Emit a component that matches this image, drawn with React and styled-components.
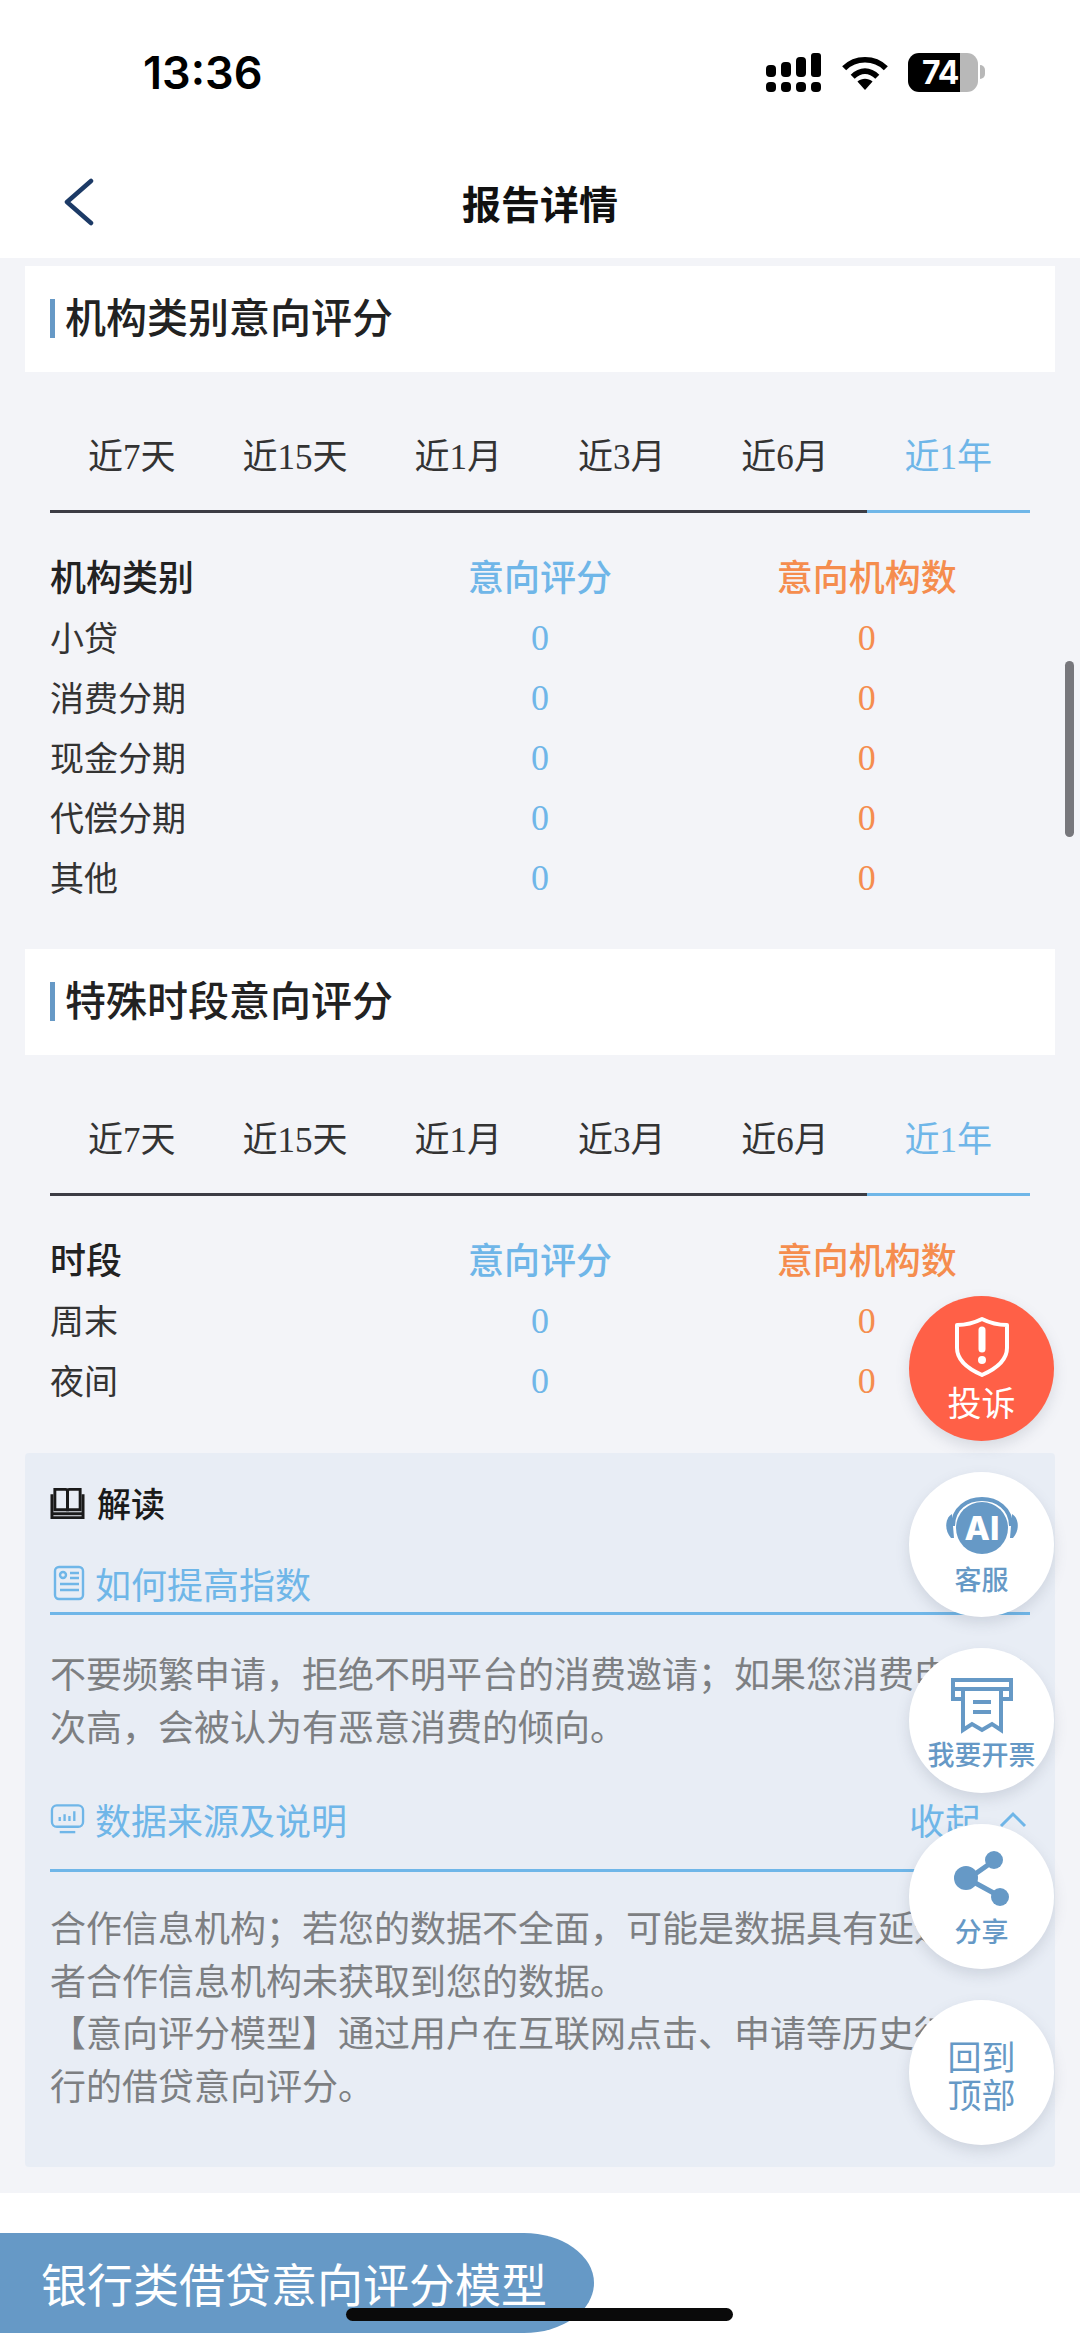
import React from "react";
import styled, { createGlobalStyle } from "styled-components";

const CJK = `"Noto Sans CJK SC", "Liberation Sans", sans-serif`;
const SERIF_CJK = `"Liberation Serif", "Noto Sans CJK SC", serif`;

const GlobalStyle = createGlobalStyle`
  html, body {
    margin: 0;
    padding: 0;
    background: #fff;
  }
  * {
    box-sizing: border-box;
  }
`;

const periods = ["近7天", "近15天", "近1月", "近3月", "近6月", "近1年"];

const Page = styled.div`
  position: relative;
  width: 1080px;
  height: 2341px;
  overflow: hidden;
  background: #fff;
  font-family: ${CJK};
`;

const StatusBar = styled.div`
  height: 146px;
  padding: 50px 102px 0 143px;
  display: flex;
  justify-content: space-between;
  align-items: flex-start;
`;

const Clock = styled.div`
  font-family: Inter, sans-serif;
  font-size: 45px;
  line-height: 46px;
  font-weight: 600;
  color: #000;
`;

const StatusIcons = styled.div`
  display: flex;
  align-items: center;
  gap: 19px;
  height: 39px;
  margin-top: 3px;
`;

const Battery = styled.div`
  position: relative;
  width: 70px;
  height: 39px;
  border-radius: 11px;
  background: linear-gradient(to right, #000 0, #000 52px, #b8b8b8 52px);
  color: #fff;
  font-family: Inter, sans-serif;
  font-size: 32px;
  line-height: 39px;
  font-weight: 700;
  letter-spacing: -1px;
  padding-left: 14px;
  white-space: nowrap;
  &::after {
    content: "";
    position: absolute;
    right: -7px;
    top: 12px;
    width: 5px;
    height: 14px;
    border-radius: 0 5px 5px 0;
    background: #b8b8b8;
  }
`;

const NavBar = styled.div`
  height: 112px;
  padding-left: 62px;
  display: flex;
  align-items: center;
  position: relative;
`;

const NavTitle = styled.div`
  position: absolute;
  left: 0;
  right: 0;
  top: 31px;
  text-align: center;
  font-size: 39px;
  line-height: 50px;
  font-weight: 700;
  color: #111;
`;

const Content = styled.div`
  background: #f3f4f8;
  padding: 8px 25px 26px;
`;

const TitleCard = styled.div`
  height: 106px;
  background: #fff;
  padding: 33px 0 0 25px;
`;

const CardTitle = styled.div`
  height: 39px;
  border-left: 5px solid #6699c6;
  padding-left: 10px;
  font-size: 41px;
  line-height: 32px;
  font-weight: 500;
  color: #222;
  white-space: nowrap;
`;

const Section = styled.div`
  padding: 0 25px;
  margin-bottom: ${(p) => p.$bottom || 0}px;
`;

const Tabs = styled.div`
  display: grid;
  grid-template-columns: repeat(6, 1fr);
  height: 141px;
  padding-top: 60px;
`;

const Tab = styled.div`
  height: 81px;
  text-align: center;
  font-family: ${SERIF_CJK};
  font-size: 35px;
  line-height: 52px;
  color: ${(p) => (p.$active ? "#6fb6e8" : "#333")};
  border-bottom: 3px solid ${(p) => (p.$active ? "#6fb6e8" : "#3c3c44")};
`;

const TableRow = styled.div`
  display: grid;
  grid-template-columns: repeat(3, 1fr);
  height: 60px;
  align-items: center;
  font-size: 34px;
  color: #333;
`;

const TableHead = styled(TableRow)`
  height: 58px;
  margin: 33px 0 2px;
  font-size: 36px;
  font-weight: 500;
  color: #222;
`;

const Cell = styled.div`
  text-align: center;
  font-family: ${SERIF_CJK};
  font-size: 36px;
  padding-top: 3px;
  color: ${(p) => p.$color};
  ${TableHead} & {
    font-family: ${CJK};
    padding-top: 0;
  }
`;

const Explain = styled.div`
  height: 714px;
  background: #e8edf5;
  border-radius: 4px;
  padding: 31px 25px 0;
`;

const ExplainHead = styled.div`
  display: flex;
  align-items: center;
  gap: 12px;
  height: 38px;
  font-size: 34px;
  line-height: 38px;
  font-weight: 500;
  color: #1a1a1a;
`;

const SubHead = styled.div`
  display: flex;
  align-items: center;
  gap: 10px;
  height: ${(p) => p.$height}px;
  margin-top: ${(p) => p.$top}px;
  padding-bottom: ${(p) => p.$pad || 0}px;
  border-bottom: 3px solid #6fb6e8;
  font-size: 36px;
  color: #6fb6e8;
`;

const Collapse = styled.div`
  margin-left: auto;
  margin-right: 3px;
  display: flex;
  align-items: center;
  gap: 18px;
`;

const Body = styled.div`
  margin-top: ${(p) => p.$top}px;
  font-size: 36px;
  line-height: 52.5px;
  color: #7d7f82;
`;

const Banner = styled.div`
  width: 594px;
  height: 100px;
  margin-top: 40px;
  padding-left: 41px;
  background: #6699c6;
  border-radius: 0 70px 70px 0 / 0 50px 50px 0;
  color: #fff;
  font-size: 46px;
  line-height: 98px;
  white-space: nowrap;
`;

const Footnote = styled.div`
  margin-top: 1px;
  padding-right: 26px;
  text-align: right;
  font-size: 28px;
  line-height: 40px;
  color: #555;
`;

const Floats = styled.div`
  position: absolute;
  left: 909px;
  top: 1296px;
  display: flex;
  flex-direction: column;
  gap: 31px;
`;

const Fab = styled.div`
  width: 145px;
  height: 145px;
  border-radius: 50%;
  background: ${(p) => (p.$red ? "#ff6047" : "#fff")};
  color: ${(p) => (p.$red ? "#fff" : "#6699c6")};
  box-shadow: 0 6px 14px rgba(90, 100, 120, 0.18);
  display: flex;
  flex-direction: column;
  align-items: center;
  justify-content: ${(p) => (p.$center ? "center" : "flex-start")};
  padding-top: ${(p) => p.$top || 0}px;
  text-align: center;
`;

const FabLabel = styled.div`
  font-size: ${(p) => p.$size}px;
  line-height: ${(p) => p.$line}px;
  font-weight: ${(p) => (p.$size < 30 ? 500 : 400)};
  white-space: nowrap;
`;

const Scrollbar = styled.div`
  position: absolute;
  left: 1065px;
  top: 661px;
  width: 9px;
  height: 176px;
  border-radius: 5px;
  background: #77777c;
`;

const HomeBar = styled.div`
  position: absolute;
  left: 346px;
  top: 2308px;
  width: 387px;
  height: 13px;
  border-radius: 7px;
  background: #0a0a0a;
`;

const SignalIcon = () => (
  <svg width="56" height="39" viewBox="0 0 56 39" fill="#000">
    <rect x="0" y="12" width="10" height="12" rx="4" />
    <rect x="15" y="9" width="10" height="15" rx="4" />
    <rect x="30" y="4" width="10" height="20" rx="4" />
    <rect x="45" y="0" width="10" height="24" rx="3" />
    <rect x="0" y="29" width="10" height="10" rx="4" />
    <rect x="15" y="29" width="10" height="10" rx="4" />
    <rect x="30" y="29" width="10" height="10" rx="4" />
    <rect x="45" y="29" width="10" height="10" rx="4" />
  </svg>
);

const WifiIcon = () => (
  <svg width="48" height="36" viewBox="0 0 50 38" fill="none" stroke="#000">
    <path d="M3 14 C15 2 35 2 47 14" strokeWidth="6" />
    <path d="M12 23 C20 15 30 15 38 23" strokeWidth="6" />
    <path d="M17 28 L25 37 L33 28 C28 24 22 24 17 28 Z" fill="#000" stroke="none" />
  </svg>
);

const BackIcon = () => (
  <svg width="34" height="48" viewBox="0 0 34 48" fill="none">
    <path d="M29 3 L5 24 L29 45" stroke="#1c3a66" strokeWidth="4.5" strokeLinecap="round" strokeLinejoin="round" />
  </svg>
);

const BookIcon = () => (
  <svg width="35" height="34" viewBox="0 0 36 34" fill="none" stroke="#1a1a1a" strokeWidth="3">
    <path d="M5 3 H16 Q18 3 18 6 V24 H5 Z" />
    <path d="M31 3 H20 Q18 3 18 6 V24 H31 Z" />
    <path d="M2 8 V32 H34 V8" />
    <path d="M2 28 H34" />
  </svg>
);

const CardIcon = () => (
  <svg width="35" height="36" viewBox="-3 0 35 36" fill="none" stroke="#6fb6e8" strokeWidth="2.4">
    <rect x="2" y="2" width="28" height="32" rx="4" />
    <circle cx="10" cy="10" r="3" />
    <path d="M17 8 H26 M17 13 H26 M7 19 H26 M7 25 H26" />
  </svg>
);

const ScreenIcon = () => (
  <svg width="35" height="32" viewBox="0 0 36 32" fill="none" stroke="#6fb6e8" strokeWidth="2.4">
    <rect x="2" y="2" width="32" height="22" rx="5" />
    <path d="M10 29.5 H26" />
    <path d="M10 18 V14 M15 18 V11 M20 18 V13 M25 18 V8" />
  </svg>
);

const ChevronUp = () => (
  <svg width="28" height="18" viewBox="0 0 28 18" fill="none">
    <path d="M2 16 L14 4 L26 16" stroke="#6fb6e8" strokeWidth="3" />
  </svg>
);

const ShieldIcon = () => (
  <svg width="56" height="62" viewBox="0 0 56 62" fill="none">
    <path d="M3 9 Q16 9 28 3 Q40 9 53 9 V32 Q53 48 28 59 Q3 48 3 32 Z" stroke="#fff" strokeWidth="4" strokeLinejoin="round" />
    <path d="M28 14 V33" stroke="#fff" strokeWidth="7" strokeLinecap="round" />
    <circle cx="28" cy="44" r="4" fill="#fff" />
  </svg>
);

const AiIcon = () => (
  <svg width="74" height="62" viewBox="0 0 74 62">
    <circle cx="37" cy="34" r="26" fill="#6699c6" />
    <path d="M8 32 C8 -4 66 -4 66 32" fill="none" stroke="#6699c6" strokeWidth="4" />
    <path d="M7 20 C0 24 -1 36 6 44 L9 44 Z" fill="#6699c6" />
    <path d="M67 20 C74 24 75 36 68 44 L65 44 Z" fill="#6699c6" />
    <text x="37" y="46" textAnchor="middle" fontFamily="Inter, sans-serif" fontSize="33" fontWeight="800" fill="#fff">AI</text>
  </svg>
);

const ReceiptIcon = () => (
  <svg width="62" height="56" viewBox="0 0 62 56" fill="none" stroke="#6699c6" strokeWidth="4">
    <path d="M10 21 H2 V2 H60 V21 H52" />
    <path d="M2 11 H60" />
    <path d="M12 11 V52 L21 46 L31 52 L41 46 L50 52 V11" />
    <path d="M22 24 H40 M22 34 H40" />
  </svg>
);

const ShareIcon = () => (
  <svg width="56" height="58" viewBox="0 0 56 58">
    <path d="M14 29 L41 10 M14 29 L47 47" stroke="#6699c6" strokeWidth="5" />
    <circle cx="12" cy="28" r="12" fill="#6699c6" />
    <circle cx="40" cy="10" r="9" fill="#6699c6" />
    <circle cx="46" cy="47" r="9" fill="#6699c6" />
  </svg>
);

const ScoreTable = ({ name, rows, bottom }) => (
  <Section $bottom={bottom}>
    <Tabs>
      {periods.map((label, i) => (
        <Tab key={label} $active={i === periods.length - 1}>
          {label}
        </Tab>
      ))}
    </Tabs>
    <TableHead>
      <div>{name}</div>
      <Cell $color="#6fb6e8">意向评分</Cell>
      <Cell $color="#f58d4e">意向机构数</Cell>
    </TableHead>
    {rows.map((row) => (
      <TableRow key={row}>
        <div>{row}</div>
        <Cell $color="#6fb6e8">0</Cell>
        <Cell $color="#f58d4e">0</Cell>
      </TableRow>
    ))}
  </Section>
);

export default function App() {
  return (
    <Page>
      <GlobalStyle />
      <StatusBar>
        <Clock>13:36</Clock>
        <StatusIcons>
          <SignalIcon />
          <WifiIcon />
          <Battery>74</Battery>
        </StatusIcons>
      </StatusBar>
      <NavBar>
        <BackIcon />
        <NavTitle>报告详情</NavTitle>
      </NavBar>
      <Content>
        <TitleCard>
          <CardTitle>机构类别意向评分</CardTitle>
        </TitleCard>
        <ScoreTable
          name="机构类别"
          rows={["小贷", "消费分期", "现金分期", "代偿分期", "其他"]}
          bottom={43}
        />
        <TitleCard>
          <CardTitle>特殊时段意向评分</CardTitle>
        </TitleCard>
        <ScoreTable name="时段" rows={["周末", "夜间"]} bottom={44} />
        <Explain>
          <ExplainHead>
            <BookIcon />
            解读
          </ExplainHead>
          <SubHead $height={61} $top={32}>
            <CardIcon />
            如何提高指数
          </SubHead>
          <Body $top={31}>
            不要频繁申请，拒绝不明平台的消费邀请；如果您消费申请频次高，会被认为有恶意消费的倾向。
          </Body>
          <SubHead $height={96} $top={25} $pad={8}>
            <ScreenIcon />
            数据来源及说明
            <Collapse>
              收起
              <ChevronUp />
            </Collapse>
          </SubHead>
          <Body $top={28}>
            合作信息机构；若您的数据不全面，可能是数据具有延迟，或者合作信息机构未获取到您的数据。
            <br />
            【意向评分模型】通过用户在互联网点击、申请等历史行为进行的借贷意向评分。
          </Body>
        </Explain>
      </Content>
      <Banner>银行类借贷意向评分模型</Banner>
      <Footnote>此部分由深层模型推测</Footnote>
      <Scrollbar />
      <Floats>
        <Fab $red $top={20}>
          <ShieldIcon />
          <FabLabel $size={34} $line={48}>投诉</FabLabel>
        </Fab>
        <Fab $top={22}>
          <AiIcon />
          <FabLabel $size={27} $line={46}>客服</FabLabel>
        </Fab>
        <Fab $top={30}>
          <ReceiptIcon />
          <FabLabel $size={27} $line={40}>我要开票</FabLabel>
        </Fab>
        <Fab $top={26}>
          <ShareIcon />
          <FabLabel $size={27} $line={46}>分享</FabLabel>
        </Fab>
        <Fab $center $top={5}>
          <FabLabel $size={34} $line={38}>回到</FabLabel>
          <FabLabel $size={34} $line={38}>顶部</FabLabel>
        </Fab>
      </Floats>
      <HomeBar />
    </Page>
  );
}
